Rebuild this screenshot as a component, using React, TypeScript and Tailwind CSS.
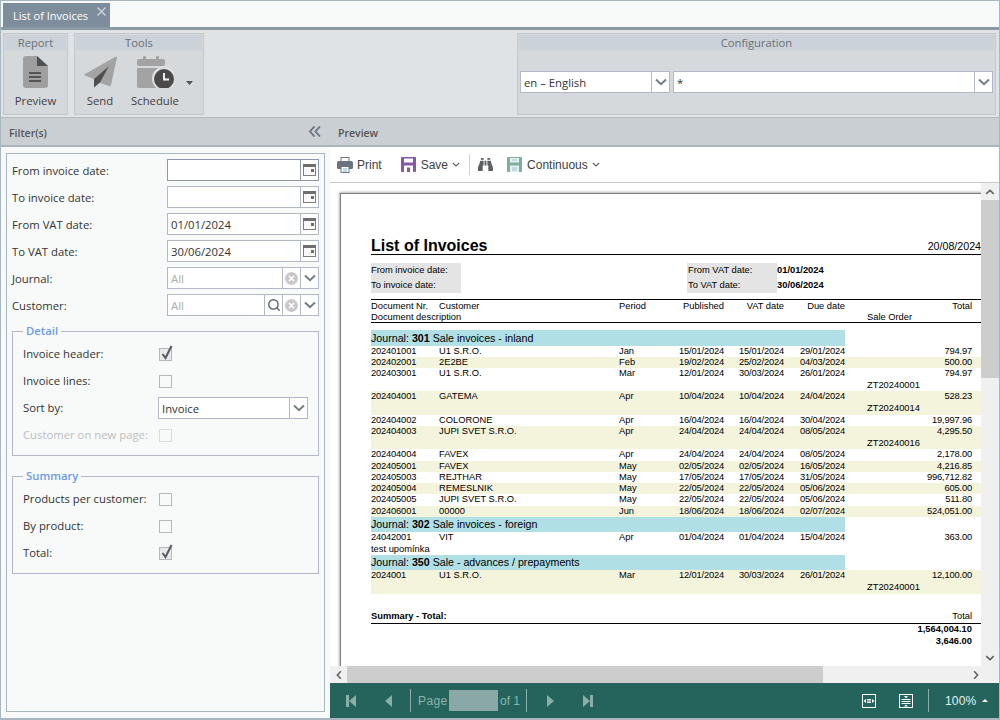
import React from 'react';
import { FaBinoculars } from 'react-icons/fa';
import { Search } from 'lucide-react';

const Chevron = ({ className = 'w-[12px] h-[8px] text-[#737b85]' }: { className?: string }) => (
  <svg viewBox="0 0 12 8" className={className} fill="none" stroke="currentColor" strokeWidth="2">
    <path d="M1 1.5 L6 6.2 L11 1.5" />
  </svg>
);

const CalendarMini = () => (
  <svg viewBox="0 0 13 12" className="w-[13px] h-[12px]">
    <rect x="0.5" y="0.5" width="12" height="11" fill="#fafafa" stroke="#7d7d7d" />
    <rect x="0" y="0" width="13" height="3" fill="#6f6f6f" />
    <rect x="8" y="5" width="3" height="3" fill="#6f6f6f" />
  </svg>
);

const ClearIcon = () => (
  <svg viewBox="0 0 13 13" className="w-[13px] h-[13px]">
    <circle cx="6.5" cy="6.5" r="6.5" fill="#c9c9c9" />
    <path d="M4 4 L9 9 M9 4 L4 9" stroke="#fff" strokeWidth="1.6" />
  </svg>
);

const DocIcon = () => (
  <svg viewBox="0 0 25 32" className="w-[25px] h-[32px]">
    <path d="M3 0H14L25 10V29a3 3 0 0 1-3 3H3a3 3 0 0 1-3-3V3a3 3 0 0 1 3-3z" fill="#9f9f9f" />
    <path d="M14 0L25 10H14z" fill="#505050" />
    <path d="M6 17H18M6 21H18M6 25H18" stroke="#555" strokeWidth="1.8" />
  </svg>
);

const PlaneIcon = () => (
  <svg viewBox="0 0 33 32" className="w-[33px] h-[32px]">
    <path d="M32 0.5a1 1 0 0 1 1 1L27 29a1.5 1.5 0 0 1-2 1L15 26.5 25 10 10 23 1 19.5a.8.8 0 0 1 0-1.5z" fill="#a3a3a3" />
    <path d="M25 10L10 23V31.5L16 26.5z" fill="#4f4f4f" />
  </svg>
);

const ScheduleIcon = () => (
  <svg viewBox="0 0 37 32" className="w-[37px] h-[32px]">
    <rect x="0" y="3" width="28" height="7" rx="2" fill="#a3a3a3" />
    <rect x="6" y="0" width="3" height="5" rx="1" fill="#a3a3a3" />
    <rect x="19" y="0" width="3" height="5" rx="1" fill="#a3a3a3" />
    <path d="M0 12H28V30a2 2 0 0 1-2 2H2a2 2 0 0 1-2-2z" fill="#a3a3a3" />
    <circle cx="27" cy="22.5" r="12" fill="#dde1e4" />
    <circle cx="27" cy="23" r="10" fill="#4a4a4a" />
    <path d="M27 17V23.5H32" stroke="#fff" strokeWidth="1.8" fill="none" />
  </svg>
);

const PrintIcon = () => (
  <svg viewBox="0 0 16 16" className="w-[16px] h-[16px]">
    <rect x="4" y="0.5" width="8" height="4" fill="#fff" stroke="#6b7280" />
    <rect x="0" y="4" width="16" height="8" rx="1.5" fill="#6b7280" />
    <rect x="4" y="9.5" width="8" height="6" fill="#fff" stroke="#6b7280" />
    <path d="M6 12H10M6 14H10" stroke="#7fb0d8" />
  </svg>
);

const SaveIcon = () => (
  <svg viewBox="0 0 15 15" className="w-[15px] h-[15px]">
    <rect width="15" height="15" rx="1" fill="#8559a8" />
    <rect x="3" y="1.5" width="9" height="4" fill="#fff" />
    <rect x="3" y="8.5" width="9" height="6.5" fill="#fff" />
    <rect x="6" y="10.5" width="3" height="4.5" fill="#8559a8" />
  </svg>
);

const ContinuousIcon = () => (
  <svg viewBox="0 0 15 15" className="w-[15px] h-[15px]">
    <rect width="15" height="15" rx="1" fill="#7fae9e" />
    <rect x="3" y="1" width="9" height="4.5" fill="#e6f1ed" />
    <rect x="3" y="8.5" width="9" height="6.5" fill="#e6f1ed" />
    <path d="M5 3H10M5 11H10M5 13H10" stroke="#9cc4dc" />
  </svg>
);

const FitWidth = () => (
  <svg viewBox="0 0 14 14" className="w-[14px] h-[14px]" fill="none" stroke="#fff">
    <rect x="0.5" y="0.5" width="13" height="13" />
    <path d="M5 7H9M5 5.5H9M5 8.5H9" />
    <path d="M1.5 7L4 5V9z M12.5 7L10 5V9z" fill="#fff" stroke="none" />
  </svg>
);

const FitHeight = () => (
  <svg viewBox="0 0 14 14" className="w-[14px] h-[14px]" fill="none" stroke="#fff">
    <rect x="0.5" y="0.5" width="13" height="13" />
    <path d="M2.5 5.5H11.5M2.5 7.5H11.5M2.5 9.5H11.5" />
    <path d="M7 4.5L5 2H9z M7 10.5L5 12.5H9z" fill="#fff" stroke="none" />
  </svg>
);

const Group = ({ title, className, children }: { title: string; className: string; children: React.ReactNode }) => (
  <div className={`border border-[#c3c8cc] bg-[#d6d9dc] p-[1px] flex flex-col ${className}`}>
    <div className="h-[15px] bg-[#cbd2da] text-[#6a6f74] text-[11.2px] leading-[16px] text-center">{title}</div>
    {children}
  </div>
);

const ToolButton = ({ icon, label, className }: { icon: React.ReactNode; label: string; className: string }) => (
  <div className={`flex flex-col items-center ${className}`}>
    <div className="h-[32px] mt-[6px] flex justify-center">{icon}</div>
    <div className="mt-[4px] text-[11.3px] leading-[17px] text-[#3f3f3f]">{label}</div>
  </div>
);

const Dropdown = ({ value, className }: { value: string; className: string }) => (
  <div className={`h-[22px] border border-[#b3b8c9] bg-white flex ${className}`}>
    <div className="flex-1 pl-[3px] text-[11.3px] leading-[21px] text-[#333]">{value}</div>
    <div className="w-[18px] border-l border-[#b3b8c9] flex items-center justify-center">
      <Chevron />
    </div>
  </div>
);

const DateField = ({ label, value, focused }: { label: string; value?: string; focused?: boolean }) => (
  <div className="flex h-[22px]">
    <div className="w-[155px] text-[11.3px] leading-[24px] text-[#333]">{label}</div>
    <div className={`w-[152px] h-[22px] border flex bg-white ${focused ? 'border-[#8f96ad]' : 'border-[#b3b8c9]'}`}>
      <div className="flex-1 pl-[3px] text-[11.3px] leading-[21px] text-[#333]">{value}</div>
      <div className={`w-[18px] border-l flex items-center justify-center ${focused ? 'border-[#8f96ad]' : 'border-[#b3b8c9]'}`}>
        <CalendarMini />
      </div>
    </div>
  </div>
);

const LookupField = ({ label, search }: { label: string; search?: boolean }) => (
  <div className="flex h-[22px]">
    <div className="w-[155px] text-[11.3px] leading-[24px] text-[#333]">{label}</div>
    <div className="w-[152px] h-[22px] border border-[#b3b8c9] flex bg-white">
      <div className="flex-1 pl-[3px] text-[11.3px] leading-[21px] text-[#aaa]">All</div>
      {search && (
        <div className="w-[18px] border-l border-[#b3b8c9] flex items-center justify-center">
          <Search size={14} strokeWidth={2.4} className="text-[#5d6570]" />
        </div>
      )}
      <div className="w-[18px] border-l border-[#b3b8c9] flex items-center justify-center">
        <ClearIcon />
      </div>
      <div className="w-[18px] border-l border-[#b3b8c9] flex items-center justify-center">
        <Chevron />
      </div>
    </div>
  </div>
);

const CheckRow = ({ label, checked, disabled }: { label: string; checked?: boolean; disabled?: boolean }) => (
  <div className="flex items-center h-[22px]">
    <div className={`w-[136px] text-[11.3px] ${disabled ? 'text-[#bdbdbd]' : 'text-[#333]'}`}>{label}</div>
    <div className={`relative w-[13px] h-[13px] border ${disabled ? 'border-[#dcdcdc]' : 'border-[#b5b8bf]'} ${checked ? 'bg-[#e9e9e9]' : ''}`}>
      {checked && (
        <svg viewBox="0 0 13 15" className="absolute left-[0px] top-[-4px] w-[13px] h-[15px]" fill="none" stroke="#555b63" strokeWidth="2">
          <path d="M2.5 9 L5.5 13 L11.5 1" />
        </svg>
      )}
    </div>
  </div>
);

const Fieldset = ({ title, children, className }: { title: string; children: React.ReactNode; className: string }) => (
  <fieldset className={`border border-[#b3b8c9] pl-[10px] pr-[10px] pt-[4px] pb-[9px] flex flex-col gap-[5px] ${className}`}>
    <legend className="h-[16px] px-[3px] text-[11.3px] leading-[16px] font-semibold text-[#6b9bea]">{title}</legend>
    {children}
  </fieldset>
);

type InvoiceRow = {
  doc: string;
  customer: string;
  period: string;
  published: string;
  vat: string;
  due: string;
  total: string;
  order?: string;
  note?: string;
  className: string;
};

const journal301: InvoiceRow[] = [
  { doc: '202401001', customer: 'U1 S.R.O.', period: 'Jan', published: '15/01/2024', vat: '15/01/2024', due: '29/01/2024', total: '794.97', className: 'h-[11px]' },
  { doc: '202402001', customer: '2E2BE', period: 'Feb', published: '19/02/2024', vat: '25/02/2024', due: '04/03/2024', total: '500.00', className: 'h-[11px] bg-[#f4f3dc]' },
  { doc: '202403001', customer: 'U1 S.R.O.', period: 'Mar', published: '12/01/2024', vat: '30/03/2024', due: '26/01/2024', total: '794.97', order: 'ZT20240001', className: 'h-[23px]' },
  { doc: '202404001', customer: 'GATEMA', period: 'Apr', published: '10/04/2024', vat: '10/04/2024', due: '24/04/2024', total: '528.23', order: 'ZT20240014', className: 'h-[24px] bg-[#f4f3dc]' },
  { doc: '202404002', customer: 'COLORONE', period: 'Apr', published: '16/04/2024', vat: '16/04/2024', due: '30/04/2024', total: '19,997.96', className: 'h-[11px]' },
  { doc: '202404003', customer: 'JUPI SVET S.R.O.', period: 'Apr', published: '24/04/2024', vat: '24/04/2024', due: '08/05/2024', total: '4,295.50', order: 'ZT20240016', className: 'h-[23px] bg-[#f4f3dc]' },
  { doc: '202404004', customer: 'FAVEX', period: 'Apr', published: '24/04/2024', vat: '24/04/2024', due: '08/05/2024', total: '2,178.00', className: 'h-[12px]' },
  { doc: '202405001', customer: 'FAVEX', period: 'May', published: '02/05/2024', vat: '02/05/2024', due: '16/05/2024', total: '4,216.85', className: 'h-[11px] bg-[#f4f3dc]' },
  { doc: '202405003', customer: 'REJTHAR', period: 'May', published: '17/05/2024', vat: '17/05/2024', due: '31/05/2024', total: '996,712.82', className: 'h-[11px]' },
  { doc: '202405004', customer: 'REMESLNIK', period: 'May', published: '22/05/2024', vat: '22/05/2024', due: '05/06/2024', total: '605.00', className: 'h-[11px] bg-[#f4f3dc]' },
  { doc: '202405005', customer: 'JUPI SVET S.R.O.', period: 'May', published: '22/05/2024', vat: '22/05/2024', due: '05/06/2024', total: '511.80', className: 'h-[12px]' },
  { doc: '202406001', customer: '00000', period: 'Jun', published: '18/06/2024', vat: '18/06/2024', due: '02/07/2024', total: '524,051.00', className: 'h-[11px] bg-[#f4f3dc]' },
];

const journal302: InvoiceRow[] = [
  { doc: '24042001', customer: 'VIT', period: 'Apr', published: '01/04/2024', vat: '01/04/2024', due: '15/04/2024', total: '363.00', note: 'test upomínka', className: 'h-[23px]' },
];

const journal350: InvoiceRow[] = [
  { doc: '2024001', customer: 'U1 S.R.O.', period: 'Mar', published: '12/01/2024', vat: '30/03/2024', due: '26/01/2024', total: '12,100.00', order: 'ZT20240001', className: 'h-[24px] bg-[#f4f3dc]' },
];

const columns = 'grid grid-cols-[68px_180px_45px_60px_60px_61px_22px_105px] w-[610px] auto-rows-[11.5px] text-[9.33px] leading-[11.5px] text-black';
const digits = 'tracking-[-0.17px] text-right';

const Row = ({ row }: { row: InvoiceRow }) => (
  <div className={`${columns} ${row.className}`}>
    <div className="tracking-[-0.17px]">{row.doc}</div>
    <div>{row.customer}</div>
    <div>{row.period}</div>
    <div className={digits}>{row.published}</div>
    <div className={digits}>{row.vat}</div>
    <div className={digits}>{row.due}</div>
    <div />
    <div className={digits}>{row.total}</div>
    {row.order && <div className="col-start-8">{row.order}</div>}
    {row.note && <div className="col-span-2">{row.note}</div>}
  </div>
);

const JournalBand = ({ code, name, className }: { code: string; name: string; className: string }) => (
  <div className={`w-[474px] bg-[#b0dfe5] text-[10.67px] text-black ${className}`}>
    Journal: <b>{code}</b> {name}
  </div>
);

const ReportPage = () => (
  <div className="w-[700px] h-[520px] border-l border-t border-[#7f7f7f] shadow-[-1px_-1px_2px_#b5b5b5] pl-[30px] pt-[43px] font-['Liberation_Sans',Arial,sans-serif]">
    <div className="w-[610px] h-[18px] border-b border-black flex justify-between">
      <div className="text-[16px] leading-[18px] font-bold text-black">List of Invoices</div>
      <div className="text-[10.67px] leading-[18px] text-black">20/08/2024</div>
    </div>
    <div className="mt-[8px] w-[610px] h-[30px] flex text-[9.33px] leading-[15px] text-black">
      <div className="w-[90px] bg-[#e4e4e4]">
        <div>From invoice date:</div>
        <div>To invoice date:</div>
      </div>
      <div className="ml-[226px] w-[90px] bg-[#e4e4e4] pl-[1px]">
        <div>From VAT date:</div>
        <div>To VAT date:</div>
      </div>
      <div className="font-bold">
        <div>01/01/2024</div>
        <div>30/06/2024</div>
      </div>
    </div>
    <div className="mt-[6px] w-[610px] h-[24px] border-y border-black pt-[1px]">
      <div className={`${columns} auto-rows-[11px] leading-[11px]`}>
        <div>Document Nr.</div>
        <div>Customer</div>
        <div>Period</div>
        <div className="text-right">Published</div>
        <div className="text-right">VAT date</div>
        <div className="text-right">Due date</div>
        <div />
        <div className="text-right">Total</div>
        <div className="col-span-3">Document description</div>
        <div className="col-start-8">Sale Order</div>
      </div>
    </div>
    <JournalBand code="301" name="Sale invoices - inland" className="mt-[7px] h-[16px] leading-[16px]" />
    {journal301.map((row) => (
      <Row key={row.doc} row={row} />
    ))}
    <JournalBand code="302" name="Sale invoices - foreign" className="h-[15px] leading-[15px]" />
    {journal302.map((row) => (
      <Row key={row.doc} row={row} />
    ))}
    <JournalBand code="350" name="Sale - advances / prepayments" className="h-[15px] leading-[15px]" />
    {journal350.map((row) => (
      <Row key={row.doc} row={row} />
    ))}
    <div className="mt-[17px] w-[610px] h-[13px] border-b border-black flex justify-between pr-[9px] text-[9.33px] leading-[11px] text-black">
      <div className="font-bold">Summary - Total:</div>
      <div>Total</div>
    </div>
    <div className="w-[601px] -mt-[1px] text-right text-[9.33px] leading-[12px] font-bold text-black">
      <div>1,564,004.10</div>
      <div>3,646.00</div>
    </div>
  </div>
);

export default function App() {
  return (
    <div className="w-[1000px] h-[720px] border border-[#a8b6c0] flex flex-col overflow-hidden bg-[#f8fafa] font-['Open_Sans','Noto_Sans',sans-serif]">
      {/* Tab strip */}
      <div className="h-[26px] pl-[2px] flex items-end">
        <div className="relative w-[107px] h-[24px] bg-[#7e8d9c] pl-[10px] text-[11px] leading-[25px] text-white">
          List of Invoices
          <svg viewBox="0 0 9 9" className="absolute right-[4px] top-[4px] w-[9px] h-[9px]" stroke="#cfd6dc" strokeWidth="1.3">
            <path d="M0.5 0.5L8.5 8.5M8.5 0.5L0.5 8.5" />
          </svg>
        </div>
      </div>
      <div className="h-[3px] bg-[#8a99a3]" />

      {/* Ribbon */}
      <div className="h-[87px] bg-[#dfe3e6] pt-[3px] pl-[2px] pr-[3px] flex">
        <Group title="Report" className="w-[65px] h-[82px]">
          <ToolButton icon={<DocIcon />} label="Preview" className="w-full" />
        </Group>
        <Group title="Tools" className="ml-[6px] w-[130px] h-[82px]">
          <div className="flex">
            <ToolButton icon={<PlaneIcon />} label="Send" className="w-[48px]" />
            <ToolButton icon={<ScheduleIcon />} label="Schedule" className="w-[60px] ml-[1px]" />
            <svg viewBox="0 0 7 4" className="w-[7px] h-[4px] mt-[31px] ml-[1px]" fill="#555">
              <path d="M0 0H7L3.5 4z" />
            </svg>
          </div>
        </Group>
        <Group title="Configuration" className="ml-auto w-[479px] h-[82px]">
          <div className="flex gap-[3px] mt-[21px] pl-[1px]">
            <Dropdown value="en – English" className="w-[150px]" />
            <Dropdown value="*" className="w-[320px]" />
          </div>
        </Group>
      </div>

      <div className="flex-1 flex min-h-0">
        {/* Filter panel */}
        <div className="w-[329px] flex flex-col">
          <div className="h-[30px] bg-[#cacfd3] border-t border-[#b4bbbf] border-b-2 border-b-[#a9b4bb] flex items-center justify-between pl-[8px] pr-[9px] pt-[4px]">
            <span className="text-[10.5px] font-semibold text-[#555]">Filter(s)</span>
            <svg viewBox="0 0 12 11" className="w-[12px] h-[11px] -mt-[4px]" fill="none" stroke="#6a7480" strokeWidth="1.8">
              <path d="M5.5 0.5L1 5.5L5.5 10.5M11 0.5L6.5 5.5L11 10.5" />
            </svg>
          </div>
          <div className="flex-1 px-[5px] pt-[6px] pb-[6px]">
            <div className="h-full border border-[#a8b6c0] px-[5px] pt-[5px] flex flex-col">
              <div className="flex flex-col gap-[5px]">
                <DateField label="From invoice date:" focused />
                <DateField label="To invoice date:" />
                <DateField label="From VAT date:" value="01/01/2024" />
                <DateField label="To VAT date:" value="30/06/2024" />
                <LookupField label="Journal:" />
                <LookupField label="Customer:" search />
              </div>
              <Fieldset title="Detail" className="mt-[7px]">
                <CheckRow label="Invoice header:" checked />
                <CheckRow label="Invoice lines:" />
                <div className="flex items-center h-[22px]">
                  <div className="w-[135px] text-[11.3px] text-[#333]">Sort by:</div>
                  <Dropdown value="Invoice" className="w-[150px]" />
                </div>
                <CheckRow label="Customer on new page:" disabled />
              </Fieldset>
              <Fieldset title="Summary" className="mt-[12px]">
                <CheckRow label="Products per customer:" />
                <CheckRow label="By product:" />
                <CheckRow label="Total:" checked />
              </Fieldset>
            </div>
          </div>
        </div>

        {/* Preview pane */}
        <div className="flex-1 flex flex-col min-w-0 bg-white font-['Liberation_Sans',Arial,sans-serif]">
          <div className="h-[30px] bg-[#cacfd3] border-t border-[#b4bbbf] border-b-2 border-b-[#a9b4bb] flex items-center pl-[8px] pt-[4px] font-['Open_Sans','Noto_Sans',sans-serif]">
            <span className="text-[10.5px] font-semibold text-[#555]">Preview</span>
          </div>
          <div className="h-[36px] border-b border-[#c8c8c8] flex items-center pl-[7px] text-[12px] text-[#3c4043]">
            <PrintIcon />
            <span className="ml-[4px]">Print</span>
            <div className="ml-[19px]">
              <SaveIcon />
            </div>
            <span className="ml-[5px]">Save</span>
            <Chevron className="w-[8px] h-[5px] ml-[4px] text-[#666]" />
            <div className="w-px h-[21px] bg-[#d0d0d0] ml-[9px]" />
            <FaBinoculars className="ml-[8px] text-[#5b5f63] w-[15px] h-[15px]" />
            <div className="ml-[14px]">
              <ContinuousIcon />
            </div>
            <span className="ml-[5px]">Continuous</span>
            <Chevron className="w-[8px] h-[5px] ml-[4px] text-[#666]" />
          </div>

          <div className="flex-1 flex min-h-0">
            <div className="flex-1 overflow-hidden pt-[10px] pl-[10px] min-w-0">
              <ReportPage />
            </div>
            <div className="w-[18px] bg-[#f0f0f0] flex flex-col">
              <div className="h-[17px] flex items-center justify-center">
                <Chevron className="w-[10px] h-[6px] text-[#606060] rotate-180" />
              </div>
              <div className="h-[178px] bg-[#cdcdcd]" />
              <div className="flex-1" />
              <div className="h-[17px] flex items-center justify-center">
                <Chevron className="w-[10px] h-[6px] text-[#606060]" />
              </div>
            </div>
          </div>

          <div className="h-[17px] bg-[#f0f0f0] flex">
            <div className="w-[17px] flex items-center justify-center">
              <Chevron className="w-[10px] h-[6px] text-[#606060] rotate-90" />
            </div>
            <div className="w-[476px] bg-[#cdcdcd]" />
            <div className="flex-1" />
            <div className="w-[33px] flex items-center justify-start pl-[5px]">
              <Chevron className="w-[10px] h-[6px] text-[#606060] -rotate-90" />
            </div>
          </div>

          {/* Pager */}
          <div className="h-[35px] bg-[#24645c] flex items-center pl-[16px] text-[12px]">
            <svg viewBox="0 0 10 12" className="w-[10px] h-[12px]" fill="#8aaea8">
              <path d="M0 0H3V12H0zM10 0V12L3 6z" />
            </svg>
            <svg viewBox="0 0 7 12" className="w-[7px] h-[12px] ml-[29px]" fill="#8aaea8">
              <path d="M7 0V12L0 6z" />
            </svg>
            <div className="w-px h-[23px] bg-[#8aaea8] ml-[18px]" />
            <span className="ml-[7px] w-[31px] text-[#8fb5af] tracking-[0.4px]">Page</span>
            <div className="w-[49px] h-[21px] bg-[#8aa9a6]" />
            <span className="ml-[2px] w-[20px] text-[#8fb5af]">of 1</span>
            <div className="w-px h-[23px] bg-[#8aaea8] ml-[6px]" />
            <svg viewBox="0 0 7 12" className="w-[7px] h-[12px] ml-[20px]" fill="#8aaea8">
              <path d="M0 0V12L7 6z" />
            </svg>
            <svg viewBox="0 0 10 12" className="w-[10px] h-[12px] ml-[29px]" fill="#8aaea8">
              <path d="M0 0V12L7 6zM7 0H10V12H7z" />
            </svg>
            <div className="ml-[269px]">
              <FitWidth />
            </div>
            <div className="ml-[23px]">
              <FitHeight />
            </div>
            <div className="w-px h-[23px] bg-[#8aaea8] ml-[15px]" />
            <span className="ml-[16px] text-[#e6f0ee] tracking-[0.2px]">100%</span>
            <svg viewBox="0 0 6 3" className="w-[6px] h-[3px] ml-[5px]" fill="#fff">
              <path d="M0 3H6L3 0z" />
            </svg>
          </div>
        </div>
      </div>
      <div className="h-[1px] bg-[#a8b6c0]" />
    </div>
  );
}
